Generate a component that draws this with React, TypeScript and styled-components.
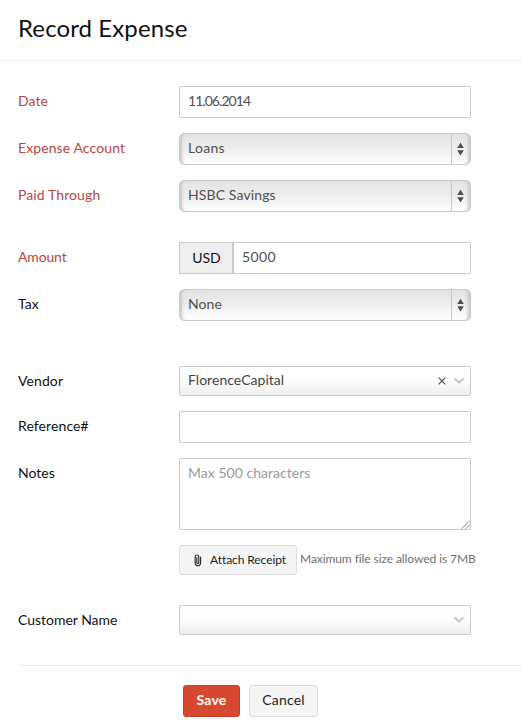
import React from "react";
import styled, { createGlobalStyle, css } from "styled-components";

const GlobalStyle = createGlobalStyle`
  * { box-sizing: border-box; }
  body {
    margin: 0;
    background: #fff;
    color: #111;
    font-family: Lato, "Open Sans", sans-serif;
    font-size: 14px;
    line-height: 20px;
    overflow: hidden;
  }
`;

const Page = styled.main`
  width: 521px;
  height: 725px;
  overflow: hidden;
  background: #fff;
`;

const Header = styled.header`
  height: 61px;
  padding: 13px 18px 0;
  border-bottom: 1px solid #ebebeb;
`;

const Title = styled.h1`
  margin: 0;
  font-size: 24px;
  line-height: 30px;
  font-weight: 400;
  letter-spacing: 0.1px;
  white-space: nowrap;
`;

const Form = styled.form`
  padding: 25px 0 0 18px;
`;

const Row = styled.div<{ $gap?: number }>`
  display: grid;
  grid-template-columns: 161px 292px;
  margin-bottom: ${(p) => p.$gap ?? 15}px;
`;

const Label = styled.label<{ $required?: boolean; $track?: number }>`
  padding-top: 5px;
  color: ${(p) => (p.$required ? "#b94442" : "#111")};
  letter-spacing: ${(p) => p.$track ?? 0.1}px;
  white-space: nowrap;
`;

const field = css`
  width: 100%;
  border: 1px solid #c9c9c9;
  border-radius: 2px;
  color: #505050;
  font: inherit;
  outline: none;
`;

const Input = styled.input<{ $track?: number }>`
  ${field}
  height: 32px;
  padding: 0 8px 3px;
  background: #fff;
  letter-spacing: ${(p) => p.$track ?? 0}px;
`;

const NativeSelect = styled.div<{ $track?: number }>`
  ${field}
  height: 32px;
  display: flex;
  border-radius: 5px;
  padding-left: 8px;
  line-height: 28px;
  letter-spacing: ${(p) => p.$track ?? 0.3}px;
  background: linear-gradient(#e4e4e4, #ececec 45%, #fff);
  box-shadow: inset 4px 0 3px -2px #c8c8c8, inset -4px 0 3px -2px #c8c8c8;
`;

const Stepper = styled.span`
  width: 19px;
  margin-left: auto;
  padding-right: 1px;
  display: flex;
  align-items: center;
  justify-content: center;
  border-left: 1px solid #c9c9c9;
`;

const AmountGroup = styled.div`
  display: flex;
`;

const Currency = styled.span`
  flex: 0 0 54px;
  height: 32px;
  border: 1px solid #c9c9c9;
  border-right: 0;
  background: #eee;
  line-height: 30px;
  text-align: center;
`;

const AmountInput = styled(Input)`
  border-radius: 0 2px 2px 0;
  box-shadow: -1px 0 #c9c9c9;
`;

const Combo = styled.div`
  ${field}
  height: 30px;
  display: flex;
  align-items: center;
  padding: 0 5px 0 8px;
  color: #444;
  letter-spacing: 0.03px;
  background: linear-gradient(#fff 20%, #fbfcfc 50%, #eee);
`;

const ComboText = styled.span`
  flex: 1;
  padding-bottom: 2px;
`;

const Notes = styled.textarea`
  ${field}
  display: block;
  height: 72px;
  padding: 4px 8px;
  letter-spacing: 0.03px;
  resize: none;
  &::placeholder { color: #999; opacity: 1; }
`;

const NotesBox = styled.div`
  position: relative;
`;

const Grip = styled.svg`
  position: absolute;
  right: 1px;
  bottom: 1px;
`;

const AttachLine = styled.div`
  display: flex;
  margin: 0 0 30px 161px;
  white-space: nowrap;
`;

const Button = styled.button<{ $primary?: boolean; $width: number }>`
  width: ${(p) => p.$width}px;
  height: 32px;
  padding: 0 0 2px;
  border: 1px solid ${(p) => (p.$primary ? "#c53f27" : "#ddd")};
  border-radius: 3px;
  background: ${(p) => (p.$primary ? "#d64830" : "#f5f5f5")};
  color: ${(p) => (p.$primary ? "#fff" : "#222")};
  font: inherit;
  font-weight: ${(p) => (p.$primary ? 700 : 400)};
  letter-spacing: 0.2px;
`;

const AttachButton = styled(Button)`
  height: 30px;
  padding: 0 10px 0 14px;
  display: flex;
  align-items: center;
  justify-content: space-between;
  font-size: 12px;
  letter-spacing: -0.08px;
`;

const Hint = styled.span`
  margin-left: 3px;
  padding-top: 4px;
  color: #707070;
  font-size: 12px;
  letter-spacing: -0.08px;
`;

const Footer = styled.footer`
  margin: 30px 0 0 18px;
  padding: 19px 0 0 165px;
  border-top: 1px solid #ebebeb;
  display: flex;
  gap: 9px;
`;

const Arrows = () => (
  <Stepper>
    <svg width="7" height="14" viewBox="0 0 7 14" fill="#505050">
      <path d="M3.5.8 6.8 6H.2zM.2 8.2h6.6l-3.3 5.2z" />
    </svg>
  </Stepper>
);

const Chevron = () => (
  <svg width="12" height="8" viewBox="0 0 12 8" fill="none" stroke="#c9c9c9" strokeWidth="2.2">
    <path d="m1.5 1.5 4.5 4 4.5-4" />
  </svg>
);

const Clear = () => (
  <svg width="8" height="8" viewBox="0 0 8 8" stroke="#505050" strokeWidth="1.2">
    <path d="m.7.7 6.6 6.6m0-6.6L.7 7.3" />
  </svg>
);

const ComboIcons = styled.span`
  display: flex;
  align-items: center;
  gap: 7px;
`;

const Clip = () => (
  <svg width="8" height="13" viewBox="0 0 8 13" fill="none" stroke="#333" strokeWidth="1.2" strokeLinecap="round">
    <path d="M2.8 3.6v5c0 1.3 2 1.3 2 0V2.7c0-2.3-3.6-2.3-3.6 0v6.2c0 3.8 5.4 3.8 5.4 0V3.1" />
  </svg>
);

export default function App() {
  return (
    <Page>
      <GlobalStyle />
      <Header>
        <Title>Record Expense</Title>
      </Header>
      <Form onSubmit={(e) => e.preventDefault()}>
        <Row>
          <Label $required>Date</Label>
          <Input defaultValue="11.06.2014" $track={-0.95} />
        </Row>
        <Row>
          <Label $required>Expense Account</Label>
          <NativeSelect>Loans<Arrows /></NativeSelect>
        </Row>
        <Row $gap={30}>
          <Label $required>Paid Through</Label>
          <NativeSelect $track={0.12}>HSBC Savings<Arrows /></NativeSelect>
        </Row>
        <Row>
          <Label $required $track={-0.15}>Amount</Label>
          <AmountGroup>
            <Currency>USD</Currency>
            <AmountInput defaultValue="5000" $track={0.4} />
          </AmountGroup>
        </Row>
        <Row $gap={45}>
          <Label>Tax</Label>
          <NativeSelect $track={0.1}>None<Arrows /></NativeSelect>
        </Row>
        <Row>
          <Label>Vendor</Label>
          <Combo>
            <ComboText>FlorenceCapital</ComboText>
            <ComboIcons><Clear /><Chevron /></ComboIcons>
          </Combo>
        </Row>
        <Row>
          <Label>Reference#</Label>
          <Input />
        </Row>
        <Row>
          <Label $track={0}>Notes</Label>
          <NotesBox>
            <Notes placeholder="Max 500 characters" />
            <Grip width="9" height="9" viewBox="0 0 9 9" stroke="#444" strokeWidth="1" strokeDasharray="1.2 .5">
              <path d="M1 8.5 8.5 1M5 8.5 8.5 5" />
            </Grip>
          </NotesBox>
        </Row>
        <AttachLine>
          <AttachButton type="button" $width={118}><Clip />Attach Receipt</AttachButton>
          <Hint>Maximum file size allowed is 7MB</Hint>
        </AttachLine>
        <Row $gap={0}>
          <Label $track={-0.02}>Customer Name</Label>
          <Combo>
            <ComboText />
            <Chevron />
          </Combo>
        </Row>
      </Form>
      <Footer>
        <Button type="button" $primary $width={57}>Save</Button>
        <Button type="button" $width={69}>Cancel</Button>
      </Footer>
    </Page>
  );
}
